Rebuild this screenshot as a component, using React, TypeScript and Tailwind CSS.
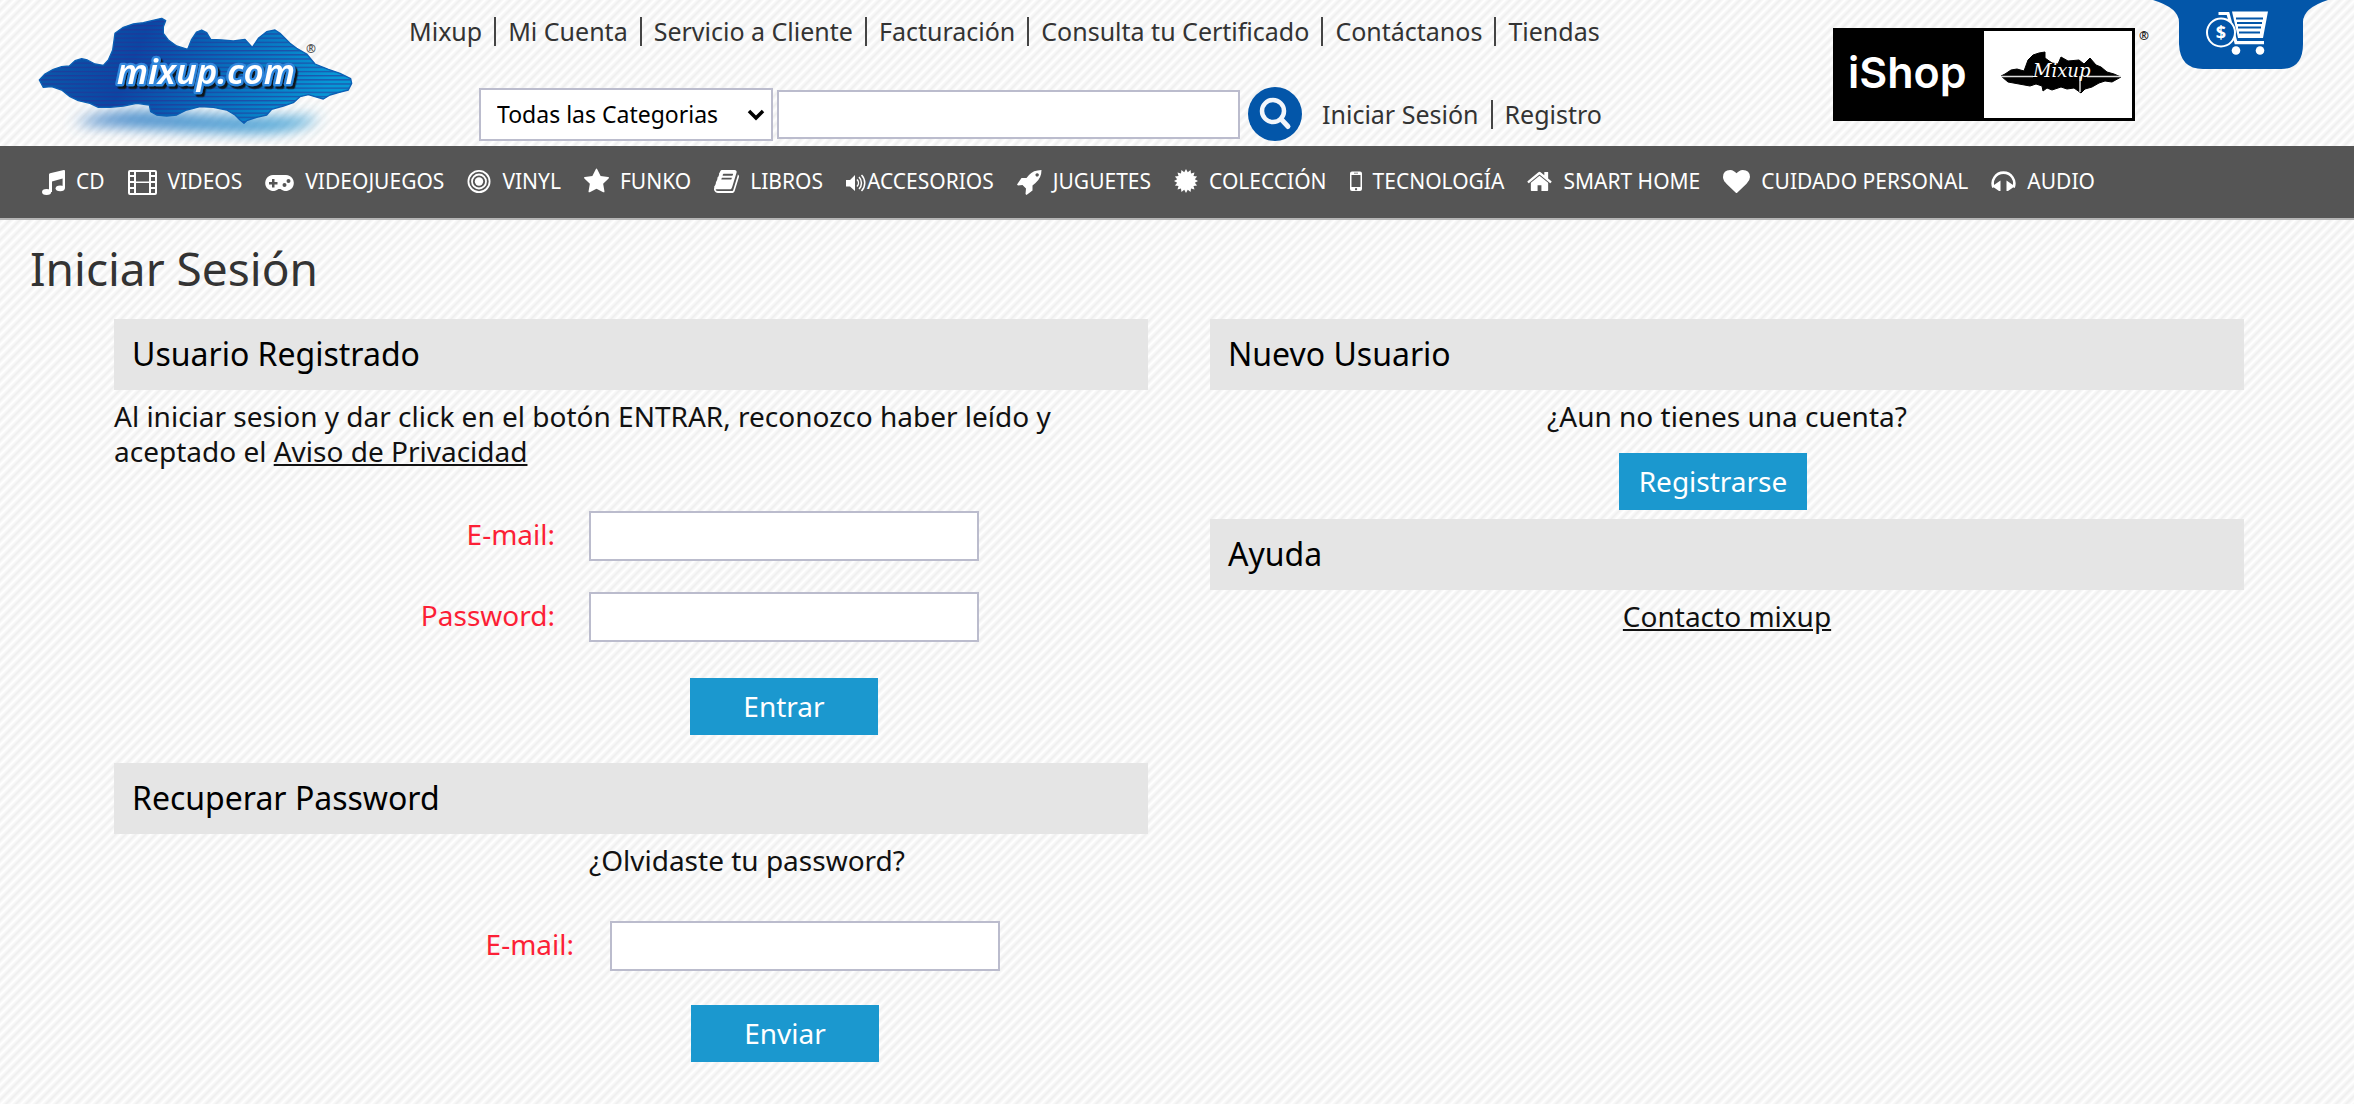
import type { ReactNode } from "react";

const topLinks = ["Mixup", "Mi Cuenta", "Servicio a Cliente", "Facturación", "Consulta tu Certificado", "Contáctanos", "Tiendas"];

const burst = Array.from({ length: 32 }, (_, i) => {
  const a = (i * Math.PI) / 16;
  const r = i % 2 ? 9 : 12;
  return `${12 + r * Math.sin(a)},${13 - r * Math.cos(a)}`;
}).join(" ");

function Icon({ box, className, children }: { box: string; className: string; children: ReactNode }) {
  return (
    <svg viewBox={box} className={`h-[27px] shrink-0 fill-current ${className}`} aria-hidden="true">
      {children}
    </svg>
  );
}

const categories: { label: string; tight?: boolean; icon: ReactNode }[] = [
  {
    label: "CD",
    icon: (
      <Icon box="0 0 23 27" className="w-[23px]">
        <ellipse cx="4.6" cy="24" rx="4.6" ry="2.9" />
        <ellipse cx="18.2" cy="20.3" rx="4.6" ry="2.9" />
        <path d="M7 6.6Q7 5.6 8 5.3L21.8 2Q23 1.8 23 3V20H20.6V10.4L10 13.4V24H7Z" />
      </Icon>
    ),
  },
  {
    label: "VIDEOS",
    icon: (
      <Icon box="0 0 29 27" className="w-[29px]">
        <path
          fillRule="evenodd"
          d="M2 2H27Q29 2 29 4V25Q29 27 27 27H2Q0 27 0 25V4Q0 2 2 2ZM8 4V13.500H21V4ZM8 15V25H21V15ZM2 4V7H6V4ZM2 9V13H6V9ZM2 15V19H6V15ZM2 21V25H6V21ZM23 4V7H27V4ZM23 9V13H27V9ZM23 15V19H27V15ZM23 21V25H27V21Z"
        />
      </Icon>
    ),
  },
  {
    label: "VIDEOJUEGOS",
    icon: (
      <Icon box="0 0 29 27" className="w-[29px]">
        <path
          fillRule="evenodd"
          d="M8 7H21A8 8 0 1 1 15.500 21H13.500A8 8 0 1 1 8 7ZM7 11V14H4V16.500H7V19.500H9.500V16.500H12.500V14H9.500V11ZM19.500 15A2 2 0 1 0 19.500 19A2 2 0 1 0 19.500 15ZM23.500 11A2 2 0 1 0 23.500 15A2 2 0 1 0 23.500 11Z"
        />
      </Icon>
    ),
  },
  {
    label: "VINYL",
    icon: (
      <Icon box="0 0 24 27" className="w-6">
        <circle cx="12" cy="13.500" r="10.600" fill="none" stroke="currentColor" strokeWidth="1.800" />
        <circle cx="12" cy="13.500" r="7" fill="none" stroke="currentColor" strokeWidth="1.800" />
        <circle cx="12" cy="13.500" r="4.200" />
      </Icon>
    ),
  },
  {
    label: "FUNKO",
    icon: (
      <Icon box="0 0 1664 1792" className="w-[25px]">
        <path d="M1664 647q0 22-26 48l-363 354 86 500q1 7 1 20 0 21-10.500 35.500t-30.500 14.500q-19 0-40-12l-449-236-449 236q-22 12-40 12-21 0-31.500-14.500t-10.500-35.500q0-6 2-20l86-500-364-354q-25-27-25-48 0-37 56-46l502-73 225-455q19-41 49-41t49 41l225 455 502 73q56 9 56 46z" />
      </Icon>
    ),
  },
  {
    label: "LIBROS",
    icon: (
      <Icon box="64 0 1664 1792" className="w-[25px]">
        <path d="M1703 478q40 57 18 129l-275 906q-19 64-76.500 107.500t-122.500 43.500h-923q-77 0-148.500-53.500t-99.500-131.500q-24-67-2-127 0-4 3-27t4-37q1-8-3-21.500t-3-19.500q2-11 8-21t16.500-23.500 16.500-23.500q23-38 45-91.500t30-91.500q3-10 .5-30t-.5-28q3-11 17-28t17-23q21-36 42-92t25-90q1-9-2.500-32t.5-28q4-13 22-30.500t22-22.500q19-26 42.500-84.500t27.500-96.500q1-8-3-25.500t-2-26.500q2-8 9-18t18-23 17-21q8-12 16.500-30.500t15-35 16-36 19.500-32 26.500-23.500 36-11.500 47.500 5.500l-1 3q38-9 51-9h761q74 0 114 56t18 130l-274 906q-36 119-71.500 153.500t-128.500 34.500h-869q-27 0-38 15-11 16-1 43 24 70 144 70h923q29 0 56-15.500t35-41.500l300-987q7-22 5-57 38 15 59 43zm-1064 2q-4 13 2 22.500t20 9.500h608q13 0 25.500-9.500t16.500-22.500l21-64q4-13-2-22.500t-20-9.500h-608q-13 0-25.500 9.500t-16.500 22.500zm-83 256q-4 13 2 22.500t20 9.500h608q13 0 25.500-9.500t16.500-22.500l21-64q4-13-2-22.500t-20-9.500h-608q-13 0-25.500 9.500t-16.500 22.500z" />
      </Icon>
    ),
  },
  {
    label: "ACCESORIOS",
    tight: true,
    icon: (
      <Icon box="0 0 21 27" className="w-[21px]">
        <path d="M0 12H4L9 7V23L4 18.500H0Z" />
        <g fill="none" stroke="currentColor" strokeWidth="1.500">
          <path d="M11 11.500A5 5 0 0 1 11 18.500" />
          <path d="M13 9A8.500 8.500 0 0 1 13 21" />
          <path d="M15.500 7A11.500 11.500 0 0 1 15.500 23" />
        </g>
      </Icon>
    ),
  },
  {
    label: "JUGUETES",
    icon: (
      <Icon box="0 0 25 27" className="w-[25px]">
        <path
          fillRule="evenodd"
          d="M24.500 2Q16 2.200 12 7L9.500 10H4.500L0 16.500L1 17.500L5.500 17L9 20.500L8.500 26L9.500 27L15.500 22.500V17.500L18.500 15Q24.500 10 24.500 2ZM20.200 5.200A1.700 1.700 0 1 1 20.100 5.200Z"
        />
      </Icon>
    ),
  },
  {
    label: "COLECCIÓN",
    icon: (
      <Icon box="0 0 24 27" className="w-6">
        <polygon points={burst} />
      </Icon>
    ),
  },
  {
    label: "TECNOLOGÍA",
    icon: (
      <Icon box="0 0 12 27" className="w-3">
        <path
          fillRule="evenodd"
          d="M2 3.500H10Q12 3.500 12 5.500V21Q12 23 10 23H2Q0 23 0 21V5.500Q0 3.500 2 3.500ZM1.500 7V19H10.500V7ZM4 4.800V5.500H8V4.800ZM6 20A1.100 1.100 0 1 0 6.100 20Z"
        />
      </Icon>
    ),
  },
  {
    label: "SMART HOME",
    icon: (
      <Icon box="64 0 1664 1792" className="w-[25px]">
        <path d="M1472 992v480q0 26-19 45t-45 19h-384v-384h-256v384h-384q-26 0-45-19t-19-45v-480q0-1 .5-3t.5-3l575-474 575 474q1 2 1 6zm223-69l-62 74q-8 9-21 11h-3q-13 0-21-7l-692-577-692 577q-12 8-24 7-13-2-21-11l-62-74q-8-10-7-23.500t11-21.500l719-599q32-26 76-26t76 26l244 204v-195q0-14 9-23t23-9h192q14 0 23 9t9 23v408l219 182q10 8 11 21.500t-7 23.500z" />
      </Icon>
    ),
  },
  {
    label: "CUIDADO PERSONAL",
    icon: (
      <Icon box="0 0 1792 1792" className="w-[27px]">
        <path d="M896 1664q-26 0-44-18l-624-602q-10-8-27.500-26t-55.500-65.500-68-97.500-53.500-121-23.500-138q0-220 127-344t351-124q62 0 126.500 21.500t120 58 95.500 68.500 76 68q36-36 76-68t95.500-68.500 120-58 126.500-21.500q224 0 351 124t127 344q0 221-229 450l-623 600q-18 18-44 18z" />
      </Icon>
    ),
  },
  {
    label: "AUDIO",
    icon: (
      <Icon box="0 0 25 27" className="w-[25px]">
        <path d="M2.500 19.500A10.800 10.800 0 1 1 22.500 19.500" fill="none" stroke="currentColor" strokeWidth="2.600" />
        <path d="M9.500 12.500V23H8L3 19.500V17Z" />
        <path d="M15.500 12.500V23H17L22 19.500V17Z" />
      </Icon>
    ),
  },
];

const skyline =
  "M118 240L135 222 160 208 185 200 208 198 225 182 245 176 262 180 285 192 310 196 325 180 338 150 345 100 370 82 400 72 430 68 465 60 485 55 497 62 490 80 490 100 505 120 530 138 563 148 575 118 590 96 605 90 620 98 632 118 665 120 700 123 735 118 757 142 775 115 800 95 825 90 840 100 870 130 890 145 920 162 945 192 985 208 1020 220 1052 236 1055 250 1045 270 1015 278 990 285 970 297 945 290 925 284 900 290 880 308 850 318 815 328 800 345 770 352 740 362 732 370 720 360 705 345 680 330 640 322 600 320 560 330 530 345 500 348 470 345 452 335 448 315 410 310 370 318 330 322 295 322 270 310 235 302 210 290 185 270 155 260 130 262Z";

function MixupLogo() {
  return (
    <svg viewBox="0 0 1200 438" className="h-[146px] w-[400px]" role="img" aria-label="mixup.com">
      <defs>
        <linearGradient id="sea" x1="0" x2="1" y1="0" y2="0.150">
          <stop offset="0" stopColor="#0b5cab" />
          <stop offset="0.350" stopColor="#0a47a3" />
          <stop offset="0.600" stopColor="#0768b8" />
          <stop offset="1" stopColor="#0698d6" />
        </linearGradient>
        <linearGradient id="mist" x1="0" x2="1" y1="0" y2="0">
          <stop offset="0" stopColor="#4a86c8" />
          <stop offset="1" stopColor="#3fa3d6" />
        </linearGradient>
        <pattern id="scan" width="12" height="12.500" patternUnits="userSpaceOnUse">
          <rect width="12" height="4" fill="#2a2f95" opacity="0.600" />
        </pattern>
        <filter id="soft" x="-20%" y="-50%" width="140%" height="200%">
          <feGaussianBlur stdDeviation="20" />
        </filter>
        <filter id="drop" x="-10%" y="-20%" width="120%" height="150%">
          <feDropShadow dx="7" dy="8" stdDeviation="2" floodColor="#10151f" />
        </filter>
      </defs>
      <path d="M220 370Q330 325 480 335T740 350T960 350Q900 400 740 398T420 385T220 370Z" fill="url(#mist)" filter="url(#soft)" />
      <path d={skyline} fill="url(#sea)" />
      <path d={skyline} fill="url(#scan)" stroke="#0a5fb4" strokeWidth="4" strokeLinejoin="round" />
      <text
        x="350"
        y="251"
        fill="#fff"
        stroke="#2f86dc"
        strokeWidth="14"
        strokeLinejoin="round"
        paintOrder="stroke"
        filter="url(#drop)"
        fontFamily="'Noto Sans', sans-serif"
        fontStyle="italic"
        fontWeight="600"
        fontSize="105"
      >
        mixup.com
      </text>
      <text x="918" y="160" fill="#555" fontFamily="'Noto Sans', sans-serif" fontWeight="700" fontSize="36">®</text>
    </svg>
  );
}

function IShopLogo() {
  return (
    <svg viewBox="0 0 320 93" className="h-[93px] w-[320px] overflow-visible" role="img" aria-label="iShop Mixup">
      <rect width="302" height="93" fill="#000" />
      <rect x="151" y="3" width="148" height="87" fill="#fff" />
      <text x="15" y="60" fill="#fff" fontFamily="Inter, sans-serif" fontWeight="600" fontSize="43">iShop</text>
      <path d="M168 48L172 46 178 42 184 41 191 43 195 32 200 27 206 25 212 24 212 30 219 35 225 36 228 29 235 33 246 32 251 36 257 30 263 37 268 39 274 44 281 46 288 49 279 54 272 53 266 55 259 59 252 61 248 65 241 60 234 61 228 59 219 62 214 60 210 63 209 58 203 56 197 58 186 56 175 54Z" fill="#000" stroke="#000" strokeLinejoin="round" />
      <path d="M168 48.500H200M254 48.500H288M247 48V64" stroke="#ddd" strokeWidth="1.500" />
      <text x="200" y="49" fill="#fff" fontFamily="'DejaVu Serif', serif" fontStyle="italic" fontSize="18">Mixup</text>
      <text x="306" y="12" fill="#222" fontFamily="'Noto Sans', sans-serif" fontWeight="700" fontSize="12">®</text>
    </svg>
  );
}

function CartTab() {
  return (
    <svg viewBox="0 0 175 70" className="h-[70px] w-[175px]" aria-hidden="true">
      <path d="M0 0Q26 8 26 22V44Q27 69 50 69H128Q150 69 150 44V22Q150 8 175 0Z" fill="#0356a9" />
      <path d="M65.500 13.500H75L83 42.700H111" fill="none" stroke="#fff" strokeWidth="3.200" />
      <path d="M79 11.500H115L110 38H85Z" fill="#fff" />
      <path d="M83 18.500H110M84 23H109M85 27.500H108M86 32.500H107" stroke="#0356a9" strokeWidth="2" />
      <circle cx="68" cy="32.500" r="14" fill="#0356a9" stroke="#fff" strokeWidth="2" />
      <text x="68" y="39" textAnchor="middle" fill="#fff" fontFamily="'Noto Sans', sans-serif" fontWeight="700" fontSize="18">$</text>
      <circle cx="83" cy="50.500" r="4.300" fill="#fff" />
      <circle cx="107" cy="50.500" r="4.300" fill="#fff" />
    </svg>
  );
}

function LinkRow({ links }: { links: string[] }) {
  return (
    <ul className="flex divide-x-2 divide-[#444]">
      {links.map((l) => (
        <li key={l} className="px-3 first:pl-0">
          <a href="#" className="block text-[25px] leading-[29px] whitespace-nowrap text-[#333]">{l}</a>
        </li>
      ))}
    </ul>
  );
}

function PanelTitle({ children }: { children: ReactNode }) {
  return <h2 className="bg-[#e5e5e5] px-[18px] pb-[2px] text-[32px] leading-[69px] text-black">{children}</h2>;
}

const field = "h-[50px] w-[390px] border-2 border-[#bbbccd] bg-white px-3 outline-none";
const action = "h-[57px] w-[188px] bg-[#1b98cf] pb-[2px] text-[28px] leading-none text-white";
const fieldLabel = "pb-1 text-right text-[28px] leading-9 text-[#fc1f36]";

export default function App() {
  return (
    <div className="min-h-screen bg-[linear-gradient(135deg,#efefef_0%,#ffffff_25%,#efefef_50%,#ffffff_75%,#efefef_100%)] bg-[length:10px_10px] font-['Noto_Sans',sans-serif] text-[#111]">
      <header className="flex items-start">
        <a href="#" className="shrink-0"><MixupLogo /></a>
        <div className="ml-[9px] pt-[17px]">
          <nav aria-label="Principal"><LinkRow links={topLinks} /></nav>
          <form className="mt-[41px] ml-[70px] flex items-center">
            <div className="relative">
              <select aria-label="Categoría" className="h-[53px] w-[294px] appearance-none border-2 border-[#bbbccd] bg-white pl-4 text-[23px] text-black outline-none">
                <option>Todas las Categorias</option>
              </select>
              <svg viewBox="0 0 18 12" className="pointer-events-none absolute top-[21px] right-2 h-3 w-[18px]" aria-hidden="true">
                <path d="M2 2L9 9L16 2" fill="none" stroke="#000" strokeWidth="3.500" />
              </svg>
            </div>
            <input aria-label="Buscar" className="ml-1 h-[49px] w-[463px] border-2 border-[#bbbccd] bg-white px-3 outline-none" />
            <button type="button" aria-label="Buscar" className="mr-5 ml-2 shrink-0">
              <svg viewBox="0 0 54 54" className="size-[54px]" aria-hidden="true">
                <circle cx="27" cy="27" r="27" fill="#0356a9" />
                <circle cx="25" cy="24" r="11" fill="none" stroke="#f2f6fb" strokeWidth="4.500" />
                <path d="M33 32L40 39.500" stroke="#f2f6fb" strokeWidth="5" strokeLinecap="round" />
              </svg>
            </button>
            <LinkRow links={["Iniciar Sesión", "Registro"]} />
          </form>
        </div>
        <div className="mr-[26px] ml-auto flex items-start">
          <a href="#" className="mt-7"><IShopLogo /></a>
          <a href="#" aria-label="Carrito"><CartTab /></a>
        </div>
      </header>

      <nav aria-label="Categorías" className="border-b-2 border-[#b5b5b5] bg-[#555] pt-[21px] pb-[23px] pl-[42px] text-white">
        <ul className="flex gap-[23px]">
          {categories.map((c) => (
            <li key={c.label}>
              <a href="#" className={c.tight ? "flex items-center" : "flex items-center gap-[11px]"}>
                {c.icon}
                <span className="text-[21px] leading-7 whitespace-nowrap">{c.label}</span>
              </a>
            </li>
          ))}
        </ul>
      </nav>

      <main>
        <h1 className="pt-[18px] pl-[30px] text-[46px] leading-[60px] text-[#333]">Iniciar Sesión</h1>
        <div className="mt-[21px] grid grid-cols-2 items-start gap-[62px] pr-[110px] pl-[114px]">
          <div>
            <section>
              <PanelTitle>Usuario Registrado</PanelTitle>
              <p className="mt-[9px] text-[28px] leading-[35px]">
                Al iniciar sesion y dar click en el botón ENTRAR, reconozco haber leído y aceptado el{" "}
                <a href="#" className="underline">Aviso de Privacidad</a>
              </p>
              <form>
                <div className="mt-[42px] grid grid-cols-[441px_390px] items-center gap-x-[34px] gap-y-[31px]">
                  <label htmlFor="email" className={fieldLabel}>E-mail:</label>
                  <input id="email" type="email" className={field} />
                  <label htmlFor="password" className={fieldLabel}>Password:</label>
                  <input id="password" type="password" className={field} />
                </div>
                <div className="mt-9 ml-[475px] flex w-[390px] justify-center">
                  <button type="button" className={action}>Entrar</button>
                </div>
              </form>
            </section>
            <section className="mt-7">
              <PanelTitle>Recuperar Password</PanelTitle>
              <p className="mt-[9px] pl-[475px] text-[28px] leading-[35px]">¿Olvidaste tu password?</p>
              <form>
                <div className="mt-[43px] grid grid-cols-[460px_390px] items-center gap-x-9">
                  <label htmlFor="recover" className={fieldLabel}>E-mail:</label>
                  <input id="recover" type="email" className={field} />
                </div>
                <div className="mt-[34px] ml-[476px] flex w-[390px] justify-center">
                  <button type="button" className={action}>Enviar</button>
                </div>
              </form>
            </section>
          </div>
          <div>
            <section>
              <PanelTitle>Nuevo Usuario</PanelTitle>
              <p className="mt-[9px] text-center text-[28px] leading-[35px]">¿Aun no tienes una cuenta?</p>
              <div className="mt-[19px] mr-7 flex justify-center">
                <button type="button" className={action}>Registrarse</button>
              </div>
            </section>
            <section className="mt-[9px]">
              <PanelTitle>Ayuda</PanelTitle>
              <p className="mt-[9px] text-center text-[28px] leading-[35px]">
                <a href="#" className="underline">Contacto mixup</a>
              </p>
            </section>
          </div>
        </div>
      </main>
    </div>
  );
}
